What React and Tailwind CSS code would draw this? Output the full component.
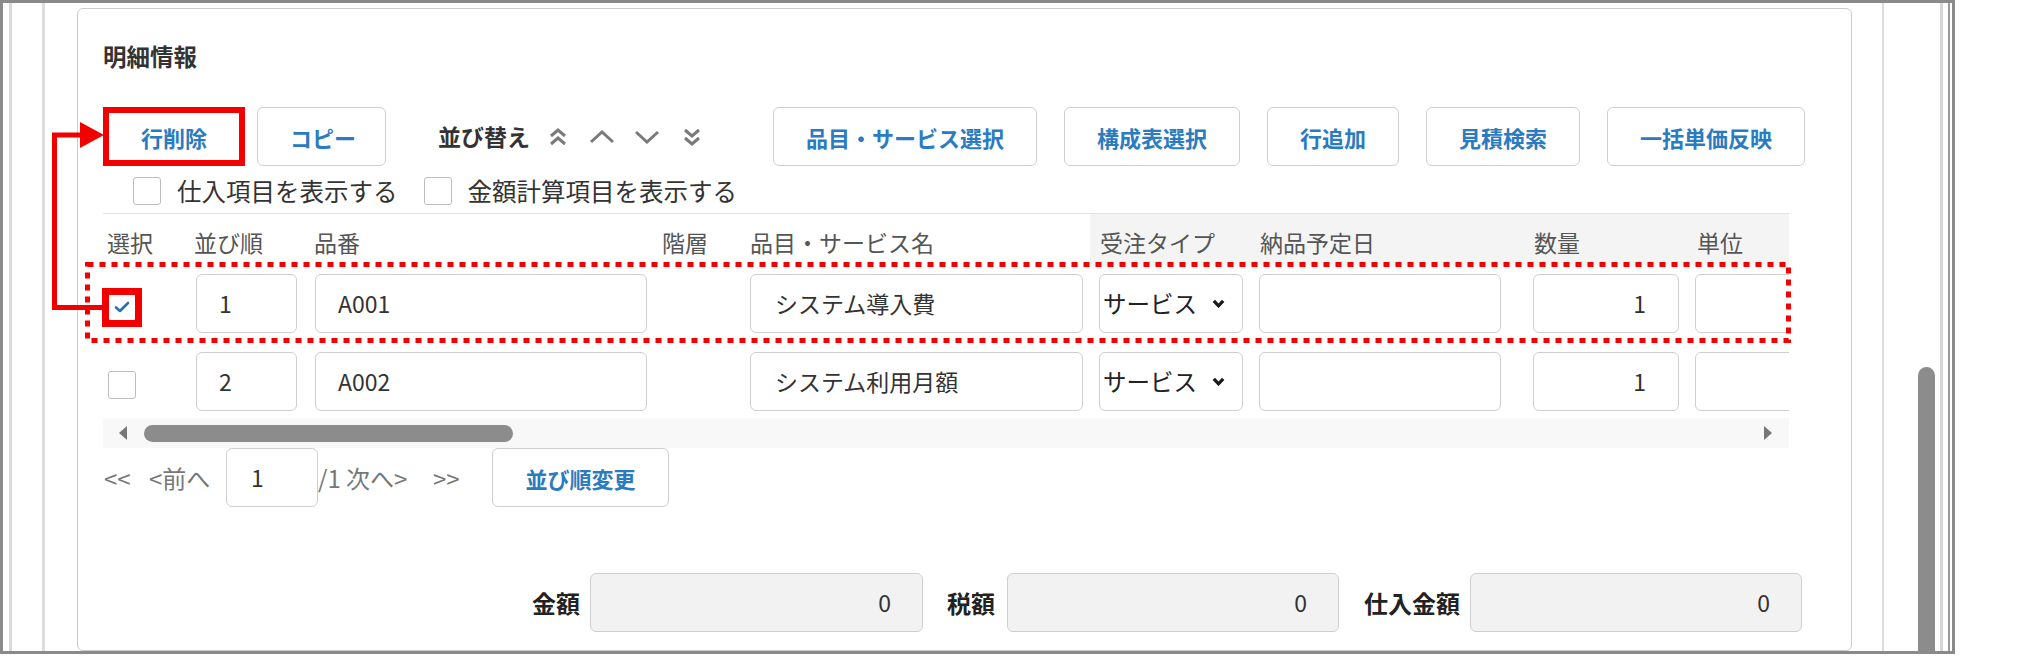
const Btn = ({ children, className = '' }) => (
  <button className={`h-[59px] shrink-0 whitespace-nowrap rounded-[6px] border border-[#cfcfcf] bg-white px-[32px] text-[22px] font-semibold leading-none text-[#2b7bc0] ${className}`}>
    {children}
  </button>
);

const Field = ({ w, children, right = false, gray = false, className = '' }) => (
  <div
    className={`flex h-[59px] shrink-0 items-center rounded-[6px] border border-[#cfcfcf] text-[23px] text-[#333] ${right ? 'justify-end pr-[31px]' : 'pl-[22px]'} ${gray ? 'bg-[#f2f2f2]' : 'bg-white'} ${className}`}
    style={{ width: w }}
  >
    {children}
  </div>
);

const Check = ({ checked = false, className = '' }) => (
  <div className={`flex h-[28px] w-[28px] shrink-0 items-center justify-center rounded-[3px] border border-[#bdbdbd] bg-white ${className}`}>
    {checked && (
      <svg width="16" height="12" viewBox="0 0 16 12">
        <path d="M2 6.5 L6 10 L14 2" fill="none" stroke="#2a6fb5" strokeWidth="2.6" strokeLinecap="round" strokeLinejoin="round" />
      </svg>
    )}
  </div>
);

const Chevron = ({ up = false, double = false }) => {
  if (double) {
    return (
      <svg width="20" height="18" viewBox="0 0 20 18" className="shrink-0">
        {up ? (
          <>
            <polyline points="3,8 10,2 17,8" fill="none" stroke="#7a7a7a" strokeWidth="3" />
            <polyline points="3,16 10,10 17,16" fill="none" stroke="#7a7a7a" strokeWidth="3" />
          </>
        ) : (
          <>
            <polyline points="3,2 10,8 17,2" fill="none" stroke="#7a7a7a" strokeWidth="3" />
            <polyline points="3,10 10,16 17,10" fill="none" stroke="#7a7a7a" strokeWidth="3" />
          </>
        )}
      </svg>
    );
  }
  return (
    <svg width="26" height="14" viewBox="0 0 26 14" className="shrink-0">
      <polyline points={up ? '2,12 13,2 24,12' : '2,2 13,12 24,2'} fill="none" stroke="#7a7a7a" strokeWidth="3" />
    </svg>
  );
};

const columns = [
  { label: '選択', w: 88, pl: 'pl-[4px]' },
  { label: '並び順', w: 120, pl: 'pl-[3px]' },
  { label: '品番', w: 346, pl: 'pl-[3px]' },
  { label: '階層', w: 90, pl: 'pl-[5px]' },
  { label: '品目・サービス名', w: 343, pl: 'pl-[3px]' },
  { label: '受注タイプ', w: 164, pl: 'pl-[10px]', gray: true },
  { label: '納品予定日', w: 274, pl: 'pl-[6px]', gray: true },
  { label: '数量', w: 162, pl: 'pl-[6px]', gray: true },
  { label: '単位', w: 150, pl: 'pl-[7px]', gray: true },
];

const rows = [
  { checked: true, order: '1', code: 'A001', name: 'システム導入費', qty: '1' },
  { checked: false, order: '2', code: 'A002', name: 'システム利用月額', qty: '1' },
];

const Row = ({ row, last }) => (
  <div className={`flex pt-[8px] ${last ? 'h-[74px]' : 'h-[78px]'}`}>
    <div className="w-[88px] shrink-0">
      <Check checked={row.checked} className="ml-[5px] mt-[19px]" />
    </div>
    <div className="w-[120px] shrink-0">
      <Field w={101} className="ml-[5px]">{row.order}</Field>
    </div>
    <div className="w-[346px] shrink-0">
      <Field w={332} className="ml-[4px]">{row.code}</Field>
    </div>
    <div className="w-[90px] shrink-0" />
    <div className="w-[343px] shrink-0">
      <Field w={333} className="ml-[3px] pl-[24px]">{row.name}</Field>
    </div>
    <div className="w-[164px] shrink-0">
      <div className="ml-[9px] flex h-[59px] w-[144px] items-center rounded-[6px] border border-[#cfcfcf] bg-white pl-[3px] text-[23.5px] text-[#222]">
        <span>サービス</span>
        <svg width="13" height="9" viewBox="0 0 13 9" className="ml-[15px]">
          <polyline points="1.8,1.8 6.5,6.8 11.2,1.8" fill="none" stroke="#1a1a1a" strokeWidth="3.2" />
        </svg>
      </div>
    </div>
    <div className="w-[274px] shrink-0">
      <Field w={242} className="ml-[5px]" />
    </div>
    <div className="w-[162px] shrink-0">
      <Field w={146} right className="ml-[5px] pr-[32px]">{row.qty}</Field>
    </div>
    <div className="w-[150px] shrink-0">
      <Field w={140} className="ml-[5px]" />
    </div>
  </div>
);

export default function App() {
  return (
    <div className="relative h-[659px] w-[2027px] overflow-hidden bg-white font-['Noto_Sans_CJK_JP',sans-serif]">
      {/* screenshot frame */}
      <div className="flex h-[654px] w-[1955px] overflow-hidden border-[3px] border-[#8a8a8a] bg-white">
        <div className="w-[6px] shrink-0" />
        <div className="w-[33px] shrink-0 border-l-[3px] border-[#dadada]" />
        <div className="w-[35px] shrink-0 border-l-[3px] border-[#dcdcdc]" />

        {/* card */}
        <div className="mt-[5px] h-[643px] w-[1775px] shrink-0 rounded-[6px] border border-[#cccccc] bg-white pl-[25px] pr-[46px] pt-[32px] text-[#333]">
          <div className="h-[30px] text-[23.5px] font-bold leading-[30px]">明細情報</div>

          {/* toolbar */}
          <div className="mt-[36px] flex h-[59px] items-center">
            <Btn className="w-[142px] px-0">行削除</Btn>
            <Btn className="ml-[12px] w-[129px] px-0">コピー</Btn>
            <span className="ml-[52px] text-[23px] font-bold leading-none text-[#333]">並び替え</span>
            <div className="ml-[18px] flex items-center">
              <Chevron up double />
              <div className="ml-[21px]"><Chevron up /></div>
              <div className="ml-[19px]"><Chevron /></div>
              <div className="ml-[22px]"><Chevron double /></div>
            </div>
            <div className="ml-auto flex gap-[27px]">
              <Btn>品目・サービス選択</Btn>
              <Btn>構成表選択</Btn>
              <Btn>行追加</Btn>
              <Btn>見積検索</Btn>
              <Btn>一括単価反映</Btn>
            </div>
          </div>

          {/* display options */}
          <div className="mt-[11px] flex h-[28px] items-center pl-[30px] text-[24.5px] leading-none text-[#333]">
            <Check />
            <span className="ml-[16px]">仕入項目を表示する</span>
            <Check className="ml-[26px]" />
            <span className="ml-[16px]">金額計算項目を表示する</span>
          </div>

          {/* table */}
          <div className="mt-[8px] w-[1686px] overflow-hidden border-t border-[#e3e3e3]">
            <div className="flex h-[52px]">
              {columns.map((c) => (
                <div
                  key={c.label}
                  className={`flex shrink-0 items-center pt-[4px] text-[23px] text-[#555] ${c.pl} ${c.gray ? 'bg-[#f4f4f4]' : 'bg-white'}`}
                  style={{ width: c.w }}
                >
                  {c.label}
                </div>
              ))}
            </div>
            {rows.map((r, i) => (
              <Row key={r.code} row={r} last={i === rows.length - 1} />
            ))}
            {/* horizontal scrollbar */}
            <div className="flex h-[30px] items-center bg-[#f8f8f8]">
              <svg width="10" height="16" viewBox="0 0 10 16" className="ml-[15px]">
                <polygon points="9,1 1,8 9,15" fill="#777" />
              </svg>
              <div className="ml-[16px] h-[17px] w-[369px] rounded-full bg-[#8c8c8c]" />
              <svg width="10" height="16" viewBox="0 0 10 16" className="ml-auto mr-[16px]">
                <polygon points="1,1 9,8 1,15" fill="#777" />
              </svg>
            </div>
          </div>

          {/* pager */}
          <div className="flex h-[59px] items-center whitespace-nowrap text-[24px] text-[#777]">
            <span className="ml-[1px] w-[45px] shrink-0">&lt;&lt;</span>
            <span className="w-[77px] shrink-0">&lt;前へ</span>
            <div className="flex h-[59px] w-[92px] shrink-0 items-center rounded-[6px] border border-[#cfcfcf] bg-white pl-[24px] text-[23px] text-[#333]">1</div>
            <span className="w-[115px] shrink-0">/1 次へ&gt;</span>
            <span className="w-[59px] shrink-0">&gt;&gt;</span>
            <Btn className="w-[177px] px-0">並び順変更</Btn>
          </div>

          {/* totals */}
          <div className="mt-[66px] flex h-[59px] items-center justify-end pr-[3px] text-[24px] font-bold text-[#222]">
            <span>金額</span>
            <Field w={333} right gray className="ml-[10px] font-normal">0</Field>
            <span className="ml-[24px]">税額</span>
            <Field w={332} right gray className="ml-[12px] font-normal">0</Field>
            <span className="ml-[25px]">仕入金額</span>
            <Field w={332} right gray className="ml-[10px] font-normal">0</Field>
          </div>
        </div>

        <div className="w-[32px] shrink-0 border-r-2 border-[#dcdcdc]" />
        {/* vertical scrollbar */}
        <div className="w-[56px] shrink-0 pl-[34px] pt-[364px]">
          <div className="h-[300px] w-[17px] rounded-t-full bg-[#8c8c8c]" />
        </div>
        <div className="w-[3px] shrink-0 bg-[#d6d6d6]" />
        <div className="w-[5px] shrink-0" />
        <div className="w-[2px] shrink-0 bg-[#9a9a9a]" />
        <div className="w-[2px] shrink-0" />
      </div>

      {/* annotations */}
      <svg className="pointer-events-none absolute left-0 top-0" width="2027" height="659">
        <rect x="106" y="110" width="136" height="53" fill="none" stroke="#f20000" strokeWidth="6" />
        <rect x="87.5" y="264.5" width="1701" height="76" fill="none" stroke="#f20000" strokeWidth="5" strokeDasharray="6 6" />
        <rect x="105.5" y="291.5" width="33" height="32" fill="none" stroke="#f20000" strokeWidth="7" />
        <polyline points="102,307.5 54.5,307.5 54.5,135 84,135" fill="none" stroke="#f20000" strokeWidth="5" />
        <polygon points="80,122 104,135 80,148" fill="#f20000" />
      </svg>
    </div>
  );
}
